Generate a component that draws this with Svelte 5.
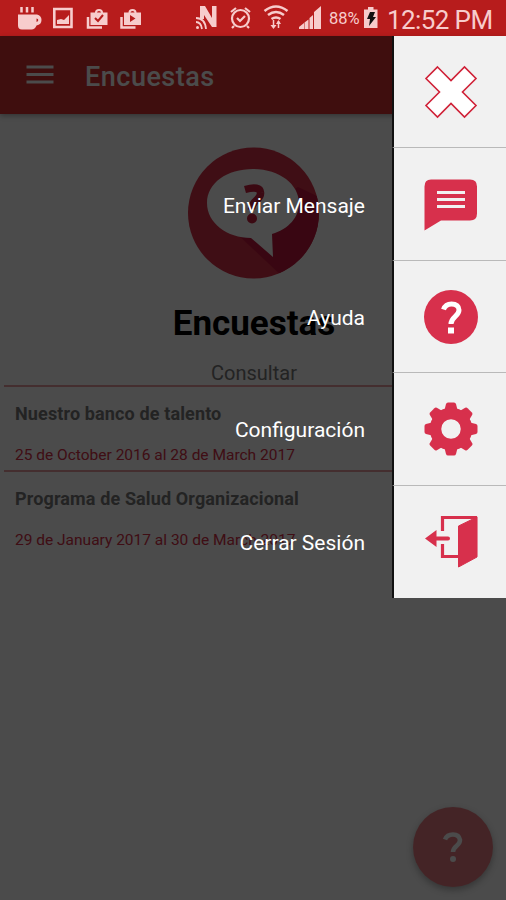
<script>
  const surveys = [
    { title: 'Nuestro banco de talento', dates: '25 de October 2016 al 28 de March 2017' },
    { title: 'Programa de Salud Organizacional', dates: '29 de January 2017 al 30 de March 2017' }
  ];

  const menu = [
    { icon: 'close', label: '' },
    { icon: 'message', label: 'Enviar Mensaje' },
    { icon: 'help', label: 'Ayuda' },
    { icon: 'settings', label: 'Configuración' },
    { icon: 'logout', label: 'Cerrar Sesión' }
  ];

  const teeth = [0, 45, 90, 135, 180, 225, 270, 315];
</script>

<div class="screen">
  <header class="status">
    <svg class="notifications" width="150" height="36" viewBox="0 0 150 36">
      <path d="M18 14.500h19q4.500 1 4.500 5.500t-5 5.500q-1.500 4-5 4H22q-4 0-4-4zM36.500 18.500v3.500q1.800-.5 1.800-2t-1.800-1.500z" fill-rule="evenodd" />
      <path d="M21.500 7v5.500M27 7v5.500M32.500 7v5.500" class="line" stroke-width="2.500" />
      <path d="M54.300 9h17.200v18H54.300z" class="line" stroke-width="2.600" />
      <path d="M57 24v-4l4-1 3 1 5-5v9z" />
      <path d="M88 17v10.500h14" class="line" stroke-width="2.500" />
      <path d="M90.500 12.500h4.500q0-3.500 4-3.500t4 3.500h4.500V25h-17zM97 12.500h4q0-1.500-2-1.500t-2 1.500z" fill-rule="evenodd" />
      <path d="M95 18l3 3 5-6" class="mark" />
      <path d="M121.500 17v10.500h14" class="line" stroke-width="2.500" />
      <path d="M124 12.500h4.500q0-3.500 4-3.500t4 3.500h4.500V25h-17zM130.500 12.500h4q0-1.500-2-1.500t-2 1.500z" fill-rule="evenodd" />
      <path d="M130 15l5.500 3.500-5.500 3.500z" class="hole" />
    </svg>
    <div class="system">
      <svg width="130" height="36" viewBox="194 0 130 36">
        <path d="M199 6h5l7 12V6h4.500v21h-4.500l-8-12v4h-4z" />
        <path d="M195 18q9 0 10 11M195 22q5 0 6 7" class="line" stroke-width="1.800" />
        <circle cx="196.500" cy="27.500" r="1.500" />
        <circle cx="239.500" cy="18.500" r="8.500" class="line" stroke-width="2.200" />
        <path d="M230 12l5-4M249 12l-5-4M233 26l-2 2M246 26l2 2M236 18l3 3 5-5" class="line" stroke-width="2.200" />
        <path d="M263.500 11q11.500-9 23 0M267 15q8-6 16 0M270.500 19q4.500-3 9 0" class="line" stroke-width="2.500" />
        <path d="M272.500 20v7M277.500 28v-7" class="line" stroke-width="1.500" />
        <path d="M269.500 25h6l-3 4zM275 24h5l-2.500-4z" />
        <path d="M298 29v-2l5-4v6zM303.500 29v-6.500l4-3V29zM308.500 29V18l3.500-3v14zM313 29V12l7-6v23z" />
      </svg>
      <span class="percent">88%</span>
      <svg width="16" height="36" viewBox="0 0 16 36">
        <path d="M1 9.500h4V7h5.500v2.500h4V28H1z" />
        <path d="M7 12h5l-2 5h3l-7 9 1-7H4z" class="bolt" />
      </svg>
      <span class="clock">12:52 PM</span>
    </div>
  </header>

  <div class="toolbar">
    <svg width="28" height="20" viewBox="0 0 28 20">
      <path d="M0.500 2h27M0.500 9.500h27M0.500 17h27" stroke="#fafafa" stroke-width="3" />
    </svg>
    <h1>Encuestas</h1>
  </div>

  <main>
    <svg class="logo" width="132" height="132" viewBox="0 0 132 132">
      <defs>
        <clipPath id="disc"><circle cx="66.500" cy="66" r="65.500" /></clipPath>
      </defs>
      <circle cx="66.500" cy="66" r="65.500" fill="#d32f46" />
      <path d="M111 40L132 50v82H98L45 82z" fill="#be173c" clip-path="url(#disc)" />
      <path d="M66 22c26 0 46 15 46 34 0 14-10 26-27 31l1 23-22-19C40 91 20 76 20 56S40 22 66 22z" fill="#fafafa" />
      <path d="M58 42.500q15-4 15.500 3c1 8-9 7-9 17" fill="none" stroke="#c61e3e" stroke-width="7.500" />
      <circle cx="65" cy="71.500" r="5" fill="#c61e3e" />
    </svg>
    <h2>Encuestas</h2>
    <p class="subtitle">Consultar</p>
    <ul class="surveys">
      {#each surveys as survey}
        <li>
          <strong>{survey.title}</strong>
          <span>{survey.dates}</span>
        </li>
      {/each}
    </ul>
  </main>

  <button class="fab" aria-label="Ayuda">
    <svg width="24" height="36" viewBox="0 0 24 36">
      <path d="M4 10.500q2-5 8-5t7 5.500c0 6-7 6-7 12" fill="none" stroke="#fafafa" stroke-width="4.500" />
      <circle cx="12" cy="30" r="3" fill="#fafafa" />
    </svg>
  </button>

  <div class="backdrop"></div>

  <nav class="menu">
    {#each menu as item}
      <div class="entry">
        <span class="label">{item.label}</span>
        <div class="tile">
          <svg width="58" height="58" viewBox="0 0 58 58">
            {#if item.icon === 'close'}
              <path d="M15.500 4L29 17.500 42.500 4 54 15.500 40.500 29 54 42.500 42.500 54 29 40.500 15.500 54 4 42.500 17.500 29 4 15.500z" fill="#fff" stroke="#d02238" stroke-width="1.600" />
            {:else if item.icon === 'message'}
              <path d="M9 3.500h39q7 0 7 7v27q0 7-7 7H19L2.500 54.500V10.500q0-7 6.500-7z" />
              <path d="M15 16.500h28M15 23.500h28M15 30.500h28" stroke="#f1f1f1" stroke-width="3" />
            {:else if item.icon === 'help'}
              <circle cx="29" cy="29" r="27" />
              <path d="M21.500 21.500q2-5.500 8-5.500c5 0 7.500 2.500 7.500 6 0 6.500-8 7-8 14" fill="none" stroke="#fff" stroke-width="5" />
              <path d="M26 39.500h6v6h-6z" fill="#fff" />
            {:else if item.icon === 'settings'}
              {#each teeth as angle}
                <path d="M22 12l2-8q.5-1.500 2-1.500h6q1.500 0 2 1.500l2 8z" transform="rotate({angle} 29 29)" />
              {/each}
              <circle cx="29" cy="29" r="15.500" fill="none" stroke="#d7304c" stroke-width="11.500" />
            {:else}
              <path d="M20.500 18V4.500h33V43M20.500 31v12.500h17" fill="none" stroke="#d7304c" stroke-width="3.200" />
              <path d="M36.500 13L55 4v40L36.500 54z" stroke="#d7304c" stroke-linejoin="round" />
              <path d="M3 25.500l11.500-8.500v6.500H26q2 0 2 2t-2 2H14.500V34z" />
            {/if}
          </svg>
        </div>
      </div>
    {/each}
  </nav>
</div>

<style>
  :global(body) {
    font-family: Roboto, sans-serif;
  }
  h1, h2, p, ul {
    margin: 0;
    padding: 0;
  }
  .screen {
    position: relative;
    display: flex;
    flex-direction: column;
    width: 506px;
    height: 900px;
    overflow: hidden;
    background: #fafafa;
  }
  .status {
    display: flex;
    justify-content: space-between;
    box-sizing: border-box;
    height: 36px;
    padding-right: 13px;
    background: #b71c1c;
    color: #f7cccc;
  }
  .status svg {
    fill: #f7cccc;
  }
  .status .line {
    fill: none;
    stroke: #f7cccc;
  }
  .status .mark {
    fill: none;
    stroke: #b71c1c;
    stroke-width: 2;
  }
  .status .hole {
    fill: #b71c1c;
  }
  .status .bolt {
    fill: #111;
  }
  .system {
    display: flex;
    align-items: center;
    margin-right: 1px;
  }
  .percent {
    width: 34px;
    margin-left: 4px;
    padding-top: 2px;
    font-size: 16.500px;
    line-height: 36px;
  }
  .clock {
    width: 105px;
    margin-left: 8px;
    padding-top: 3px;
    font-size: 26px;
    letter-spacing: -0.600px;
    line-height: 36px;
    white-space: nowrap;
  }
  .toolbar {
    display: flex;
    align-items: center;
    gap: 31px;
    box-sizing: border-box;
    height: 78px;
    padding: 0 0 0 26px;
    background: #d32f2f;
    box-shadow: 0 2px 5px rgba(0, 0, 0, 0.3);
  }
  h1 {
    padding-top: 4px;
    color: #fafafa;
    font-size: 27px;
    font-weight: 500;
    letter-spacing: 0.500px;
  }
  main {
    display: flex;
    flex-direction: column;
    align-items: center;
    padding-top: 33px;
  }
  h2 {
    margin: 25px 0 0 2px;
    color: #000;
    font-size: 35px;
    font-weight: 700;
    line-height: 40px;
  }
  .subtitle {
    margin: 17px 0 0 2px;
    color: #777;
    font-size: 20px;
    line-height: 24px;
  }
  .surveys {
    align-self: stretch;
    margin: 0 4px;
    list-style: none;
  }
  .surveys li {
    display: flex;
    flex-direction: column;
    box-sizing: border-box;
    height: 84.500px;
    padding: 16px 0 0 11px;
    border-top: 2px solid #e59a9e;
  }
  .surveys strong {
    color: #777;
    font-size: 18px;
    letter-spacing: 0.130px;
    line-height: 22px;
  }
  .surveys span {
    margin-top: 20px;
    color: #d32f46;
    font-size: 15.500px;
    line-height: 20px;
  }
  .fab {
    position: absolute;
    right: 13px;
    bottom: 13px;
    display: flex;
    align-items: center;
    justify-content: center;
    width: 80px;
    height: 80px;
    padding: 0;
    border: 0;
    border-radius: 50%;
    background: #e57b80;
    box-shadow: 0 3px 7px rgba(0, 0, 0, 0.3);
  }
  .backdrop {
    position: absolute;
    inset: 36px 0 0;
    background: rgba(0, 0, 0, 0.7);
  }
  .menu {
    position: absolute;
    top: 36px;
    right: 0;
  }
  .entry {
    display: flex;
    align-items: center;
    justify-content: flex-end;
    height: 112.400px;
  }
  .label {
    padding: 2px 27px 0 0;
    color: #fff;
    font-size: 21px;
  }
  .tile {
    display: flex;
    align-items: center;
    justify-content: center;
    box-sizing: border-box;
    width: 114px;
    height: 100%;
    border-left: 2px solid #111;
    border-bottom: 1.500px solid #b9b9b9;
    background: #f1f1f1;
    fill: #d7304c;
  }
  .tile svg {
    position: relative;
    left: 0.500px;
    top: 0.500px;
  }
  .entry:last-child .tile {
    border-bottom: 0;
  }
</style>
